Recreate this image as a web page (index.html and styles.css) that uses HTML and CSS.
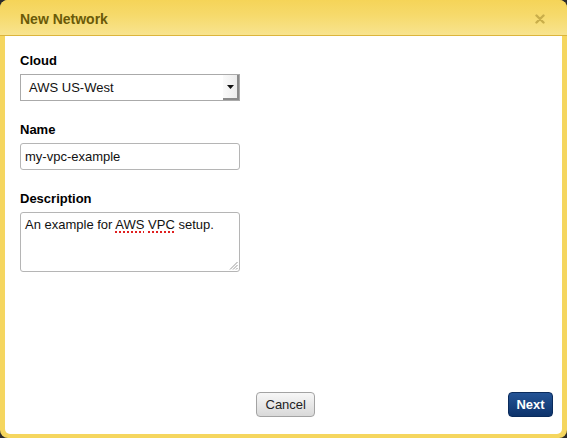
FILE: index.html
```html
<!DOCTYPE html>
<html>
<head>
<meta charset="utf-8">
<link rel="stylesheet" href="styles.css">
</head>
<body>
<div class="dialog">
  <div class="header">
    <span class="title">New Network</span>
    <svg class="close" width="10" height="10" viewBox="0 0 10 10"><path d="M1.5 1.5 L8.5 8.5 M8.5 1.5 L1.5 8.5" stroke="#c9ae4a" stroke-width="2.4" stroke-linecap="round"/></svg>
  </div>
  <div class="body">
    <div class="form">
      <div class="field">
        <div class="label">Cloud</div>
        <div class="select">
          <span class="select-text">AWS US-West</span>
          <span class="select-btn"><svg width="7" height="4" viewBox="0 0 7 4"><path d="M0 0 H7 L3.5 4 Z" fill="#111"/></svg></span>
        </div>
      </div>
      <div class="field">
        <div class="label">Name</div>
        <div class="input">my-vpc-example</div>
      </div>
      <div class="field">
        <div class="label">Description</div>
        <div class="textarea">An example for <span class="spell">AWS</span> <span class="spell">VPC</span> setup.
          <svg class="grip" width="9" height="9" viewBox="0 0 9 9"><path d="M8.5 1 L1 8.5 M8.5 4 L4 8.5 M8.5 7 L7 8.5" stroke="#999" stroke-width="1"/></svg>
        </div>
      </div>
    </div>
    <div class="footer">
      <span></span>
      <button class="btn cancel">Cancel</button>
      <button class="btn next">Next</button>
    </div>
  </div>
</div>
</body>
</html>
```
FILE: styles.css
```css
html, body {
  margin: 0;
  padding: 0;
  background: #2b2b2b;
}
body {
  width: 567px;
  height: 438px;
  font-family: "Liberation Sans", Arial, sans-serif;
}
.dialog {
  box-sizing: border-box;
  width: 567px;
  height: 438px;
  background: #f5d65f;
  border-radius: 8px;
  padding: 0 5px 4px 5px;
  display: flex;
  flex-direction: column;
}
.header {
  height: 35px;
  border-bottom: 1px solid #dcb53c;
  background: linear-gradient(#f5d458 0%, #f6da6c 45%, #f8e48f 100%);
  margin: 0 -5px;
  padding: 0 20px 0 20px;
  display: flex;
  align-items: center;
  justify-content: space-between;
  border-radius: 8px 8px 0 0;
}
.title {
  font-size: 14px;
  font-weight: bold;
  color: #6a5a08;
  padding-top: 2px;
}
.close {
  margin-right: 2px;
  margin-top: 2px;
}
.body {
  flex: 1;
  background: #fff;
  border-radius: 0 0 5px 5px;
  display: flex;
  flex-direction: column;
  justify-content: space-between;
}
.form {
  padding: 16px 15px 0 15px;
  display: flex;
  flex-direction: column;
  gap: 20px;
}
.label {
  font-size: 13px;
  font-weight: bold;
  color: #000;
  line-height: 16px;
  padding-top: 1px;
  margin-bottom: 5px;
}
.select {
  box-sizing: border-box;
  width: 220px;
  height: 27px;
  border: 1px solid #aaa;
  display: flex;
  align-items: stretch;
  background: #fff;
}
.select-text {
  flex: 1;
  font-size: 13px;
  color: #111;
  line-height: 25px;
  padding-left: 8px;
}
.select-btn {
  width: 14px;
  background: linear-gradient(90deg, #fafafa, #ececec);
  border-right: 2px solid #8a8a8a;
  border-bottom: 2px solid #8a8a8a;
  display: flex;
  align-items: center;
  justify-content: center;
}
.input {
  box-sizing: border-box;
  width: 220px;
  height: 27px;
  border: 1px solid #b5b5b5;
  border-radius: 3px;
  font-size: 13px;
  line-height: 25px;
  padding-left: 4px;
  color: #111;
}
.textarea {
  position: relative;
  box-sizing: border-box;
  width: 220px;
  height: 60px;
  border: 1px solid #b5b5b5;
  border-radius: 3px;
  font-size: 13px;
  line-height: 16px;
  padding: 4px 4px;
  color: #111;
}
.spell {
  text-decoration: underline dotted #e02020;
  text-decoration-thickness: 2px;
  text-underline-offset: 2px;
}
.grip {
  position: absolute;
  right: 1px;
  bottom: 1px;
}
.footer {
  display: grid;
  grid-template-columns: 1fr auto 1fr;
  align-items: center;
  padding: 0 9px 17px 12px;
}
.btn {
  height: 25px;
  border-radius: 4px;
  font-family: "Liberation Sans", Arial, sans-serif;
  font-size: 13px;
  padding: 0 9px;
}
.cancel {
  background: linear-gradient(#f7f7f7, #d9d9d9);
  border: 1px solid #a3a3a3;
  color: #222;
  width: 59px;
}
.next {
  justify-self: end;
  background: linear-gradient(#245496, #0d336b);
  border: 1px solid #0a2b5c;
  color: #fff;
  font-weight: bold;
  width: 45px;
  padding: 0;
}
```
